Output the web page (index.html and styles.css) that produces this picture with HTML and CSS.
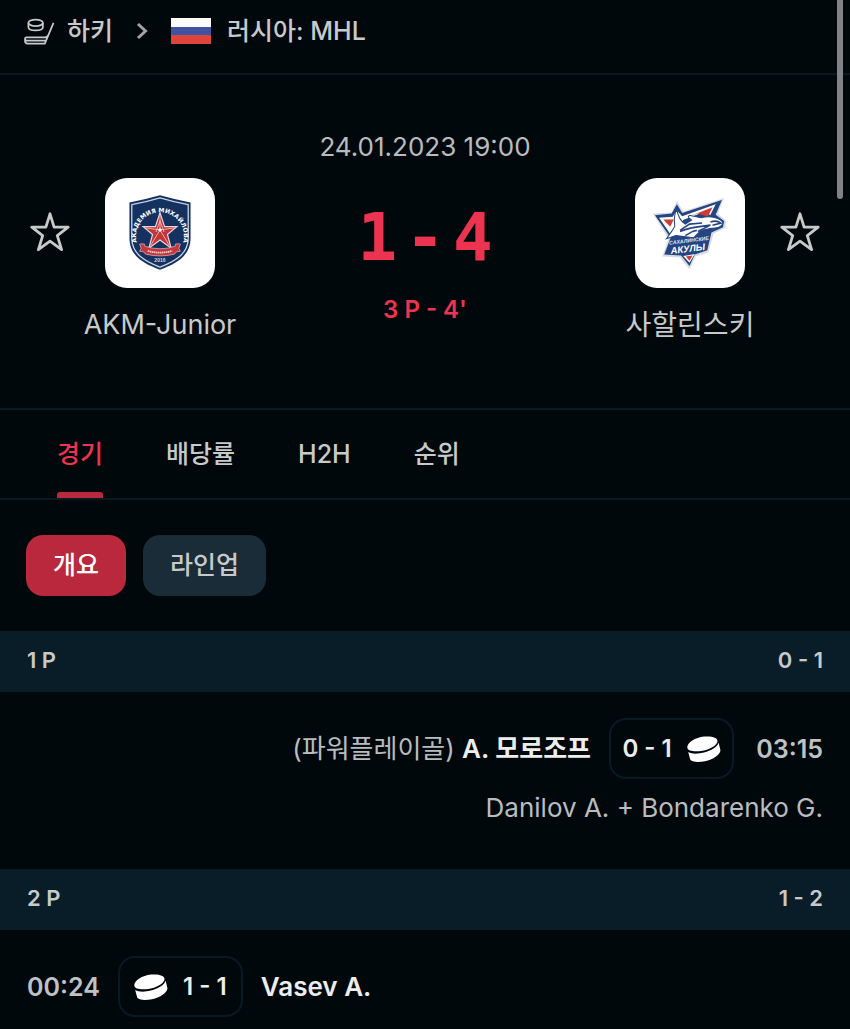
FILE: index.html
```html
<!DOCTYPE html>
<html lang="ko">
<head>
<meta charset="utf-8">
<meta name="viewport" content="width=device-width, initial-scale=1">
<title>AKM-Junior - 사할린스키</title>
<link rel="stylesheet" href="styles.css">
</head>
<body>
<svg class="symbols" aria-hidden="true">
  <symbol id="star" viewBox="0 0 40 40"><path d="M20 1.800 24.100 15.200H38.200L27.300 23.600 31.600 37.600 20 29.200 8.400 37.600 12.700 23.600 1.800 15.200H15.900Z" fill="none" stroke="currentColor" stroke-width="2.800" stroke-linejoin="round"/></symbol>
  <symbol id="puck" viewBox="0 0 34 26"><path d="M.3 11.500C0 7 8 1.500 17 .6 24-.2 30.500 1.200 30.500 5 30.500 9.500 22 14 14 15 7 15.800.6 15 .3 11.500ZM1.200 16C5 18.300 11 18 17 16.600 24 14.800 30.500 11.200 31.600 6.600L33.400 14C33.600 18.500 26 23.500 18 25.200 11 26.500 4.500 26 3.200 23.500Z" fill="currentColor"/></symbol>
</svg>

<header class="breadcrumb">
  <a class="crumb" href="#hockey">
    <svg class="sport-icon" viewBox="0 0 32 28" aria-hidden="true"><g fill="none" stroke="currentColor" stroke-width="1.800" stroke-linejoin="round"><ellipse cx="12" cy="5" rx="7.500" ry="3.400"/><path d="M4.500 5v4.500c0 4.500 15 4.500 15 0V5M30.500 5 21.500 26.500H4C1.500 26.500 1 25 1 23.500V21.500C1 20.500 1.500 20 2.500 20H21.500C23.500 20 24.500 19.500 25 18M1 22C1.500 23.500 2.500 23.500 4 23.500H22"/></g></svg>
    <span>하키</span>
  </a>
  <svg class="chevron" viewBox="0 0 12 18" aria-hidden="true"><path d="M2 2 9.500 9 2 16" fill="none" stroke="currentColor" stroke-width="3"/></svg>
  <a class="crumb league" href="#mhl">
    <span class="flag" aria-hidden="true"></span>
    <span>러시아: MHL</span>
  </a>
</header>

<main>
  <section class="match">
    <time class="kickoff" datetime="2023-01-24T19:00">24.01.2023 19:00</time>
    <div class="duel">
      <button class="favorite" type="button" aria-label="AKM-Junior"><svg viewBox="0 0 40 40"><use href="#star"/></svg></button>
      <a class="team" href="#akm">
        <span class="crest">
          <svg viewBox="1 2 108 108" aria-hidden="true">
            <defs><path id="arc" d="M32 64A23.500 23.500 0 1 1 78 64"/></defs>
            <path d="M25 26Q41 23 55 19 69 23 85 26V61C85 78 72 86 55 92 38 86 25 78 25 61Z" fill="#14315f"/>
            <path d="M27.300 28.200Q42 25.500 55 21.600 68 25.500 82.700 28.200V61C82.700 76 71 83.500 55 89.500 39 83.500 27.300 76 27.300 61Z" fill="none" stroke="#c6d2e3" stroke-width="1.300"/>
            <text class="crest-arc"><textPath href="#arc" startOffset="50%" text-anchor="middle">АКАДЕМИЯ МИХАЙЛОВА</textPath></text>
            <path d="M55 36 59.500 49.800H71.500L62.300 57.400 66 71 55 62.800 44 71 47.700 57.400 38.500 49.800H50.500Z" fill="#c13538" stroke="#e4d5da" stroke-width="1.200"/>
            <path d="M55 38V53M55 53 69 51M55 53 64 68M55 53 46 68M55 53 41 51M51 55 55 44 59 55" fill="none" stroke="#ecc8cc" stroke-width=".8"/>
            <circle cx="55" cy="53" r="1.600" fill="#fff"/>
            <path d="M35 67Q37 66 40 67V69Q55 74 70 69V67Q73 66 75 67L73.500 71 75 74 71 74.500Q70 77 68 77 55 80 42 77 40 77 39 74.500L35 74 36.500 71Z" fill="#c4373b" stroke="#ddb7c1" stroke-width=".7"/>
            <path d="M43 73.500Q55 77 67 73.500" fill="none" stroke="#f0cdd1" stroke-width="1.700" stroke-dasharray="1.500 .5"/>
            <text class="crest-year" x="55" y="84.500">2016</text>
          </svg>
        </span>
        <span class="team-name">AKM-Junior</span>
      </a>
      <div class="result">
        <div class="score"><span>1</span><span>-</span><span>4</span></div>
        <div class="status">3 P - 4'</div>
      </div>
      <a class="team" href="#sakhalin">
        <span class="crest">
          <svg viewBox="2 3 105 105" aria-hidden="true">
            <path d="M19 37 37 36 42 25 48 35 87 22 81 37 89 44 88 51 77 56 72 74 60 78 54 90 45 79 28 78 34 61Z" fill="#d5dae3"/>
            <path d="M21 38.500 37 37 42 28 47 36.500 85 24 79 38 87 44 86 50 75 55 71 72 59 76 54 87 46 77 30 76 36 60Z" fill="#244482"/>
            <path d="M25 41 38 40 42 34 47 39.500 79 28 74 38 64 37 48 43 43 51 36 57Z" fill="#fff"/>
            <path d="M29 42.500H39L35.500 49.500ZM53 40 76 31 71.500 40 62 37Z" fill="#cf3b35"/>
            <path d="M32 61 37 54 40 49C39 42 40 36 42 33 43 40 45 44 50 47L56 43C51 40 53 38 56 39L65 41C75 38 85 42 86 46 85 49 81 51 75 51L65 53 58 60 50 59 41 58Z" fill="#fff" stroke="#244482" stroke-width="1"/>
            <path d="M45 54C54 50 65 49 74 48L62 54M50 58 57 54 61 53M45 53 54 47 66 46M74 45Q80 43 84 46L76 48" fill="none" stroke="#244482" stroke-width="1.500"/>
            <path d="M48 77.500 54 76.500 59 75.500 54 84Z" fill="#fff"/>
            <path d="M50.500 78 57 77 54 82Z" fill="#cf3b35"/>
            <g transform="rotate(-7 53 67)"><text class="shark-top" x="54" y="64.500">САХАЛИНСКИЕ</text><text class="shark-name" x="52" y="73.500">АКУЛЫ</text></g>
          </svg>
        </span>
        <span class="team-name hangul">사할린스키</span>
      </a>
      <button class="favorite" type="button" aria-label="사할린스키"><svg viewBox="0 0 40 40"><use href="#star"/></svg></button>
    </div>
  </section>

  <nav class="tabs">
    <a class="tab active" href="#match" aria-current="page">경기</a>
    <a class="tab" href="#odds">배당률</a>
    <a class="tab" href="#h2h">H2H</a>
    <a class="tab" href="#standings">순위</a>
  </nav>

  <div class="chips">
    <button class="chip selected" type="button">개요</button>
    <button class="chip" type="button">라인업</button>
  </div>

  <section>
    <h2 class="period"><span>1 P</span><span>0 - 1</span></h2>
    <div class="event away">
      <div class="event-line">
        <span class="time">03:15</span>
        <span class="goal"><svg class="puck" viewBox="0 0 34 26" aria-hidden="true"><use href="#puck"/></svg><span>0 - 1</span></span>
        <span class="scorer"><span class="note">(파워플레이골)</span> <b>A. 모로조프</b></span>
      </div>
      <div class="assist">Danilov A. + Bondarenko G.</div>
    </div>
  </section>

  <section>
    <h2 class="period"><span>2 P</span><span>1 - 2</span></h2>
    <div class="event last">
      <div class="event-line">
        <span class="time">00:24</span>
        <span class="goal"><svg class="puck" viewBox="0 0 34 26" aria-hidden="true"><use href="#puck"/></svg><span>1 - 1</span></span>
        <span class="scorer"><b>Vasev A.</b></span>
      </div>
    </div>
  </section>
</main>
<div class="scroll-thumb" aria-hidden="true"></div>
</body>
</html>
```
FILE: styles.css
```css
* { box-sizing: border-box; }

body {
  margin: 0;
  min-height: 100vh;
  position: relative;
  background: #01080c;
  color: #c8caca;
  font: 400 24px/32px Inter, "Noto Sans CJK KR", sans-serif;
}

a { color: inherit; text-decoration: none; }
button { border: 0; padding: 0; background: none; color: inherit; font: inherit; cursor: pointer; }
svg { display: block; }
.symbols { position: absolute; width: 0; height: 0; }

.breadcrumb {
  display: flex;
  align-items: center;
  padding: 15px 24px 26px;
  border-bottom: 2px solid #071a24;
  font-size: 25px;
  font-weight: 500;
}
.crumb { display: flex; align-items: center; gap: 12px; }
.league { gap: 16px; }
.sport-icon { width: 31px; height: 27px; }
.chevron { width: 12px; height: 18px; margin: 0 23px; color: #a2a3a4; }
.flag {
  width: 40px;
  height: 26px;
  background: linear-gradient(#fafafa 34%, #4053a3 34% 67%, #dc443c 67%);
}

.match { padding: 56px 30px 65px; border-bottom: 2px solid #071a24; }
.kickoff { display: block; margin-bottom: 15px; text-align: center; font-size: 26px; color: #b9bcbe; }
.duel { display: grid; grid-template-columns: 40px 180px 1fr 180px 40px; align-items: start; }
.favorite { margin-top: 34px; }
.favorite svg { width: 40px; height: 40px; }
.team { display: flex; flex-direction: column; align-items: center; gap: 19px; }
.crest { width: 110px; height: 110px; border-radius: 22px; background: #fff; overflow: hidden; }
.crest-arc { font: 700 6px "DejaVu Sans", sans-serif; fill: #fff; }
.crest-year { font: 700 5px "Liberation Sans", sans-serif; fill: #c9d3e2; text-anchor: middle; }
.shark-top { font: italic 700 5px "Liberation Sans", sans-serif; fill: #dfe6f2; text-anchor: middle; }
.shark-name { font: italic 700 9px "Liberation Sans", sans-serif; fill: #fff; text-anchor: middle; }
.team-name { font-size: 27px; line-height: 36px; white-space: nowrap; }
.hangul { font-size: 28px; }
.result { padding-top: 30px; text-align: center; color: #ec334f; }
.score {
  display: flex;
  justify-content: center;
  gap: 8px;
  font: 700 66px/60px "DejaVu Sans Mono", monospace;
}
.status { margin-top: 26px; font-weight: 600; }

.tabs { display: flex; gap: 63px; padding: 0 57px; border-bottom: 2px solid #071a24; font-size: 25px; font-weight: 500; }
.tab { padding: 28px 0 22px; border-bottom: 6px solid transparent; }
.tab.active { color: #ec334f; position: relative; }
.tab.active::after {
  content: "";
  position: absolute;
  inset: auto 0 -6px;
  height: 6px;
  border-radius: 3px 3px 0 0;
  background: #b9283c;
}

.chips { display: flex; gap: 17px; padding: 35px 26px; }
.chip { height: 61px; padding: 0 27px 2px; border-radius: 17px; background: #1a2c37; font-size: 25px; font-weight: 500; }
.chip.selected { background: #b9283c; color: #fff; }

.period {
  display: flex;
  justify-content: space-between;
  align-items: center;
  height: 61px;
  margin: 0;
  padding: 0 27px 3px;
  background: #091d28;
  font-size: 22px;
  font-weight: 600;
}
.event { padding: 26px 27px 45px; font-size: 26px; }
.event.last { padding-bottom: 12px; }
.event-line { display: flex; align-items: center; gap: 18px; }
.away .event-line, .away .goal { flex-direction: row-reverse; }
.time { min-width: 71px; font-size: 25px; font-weight: 600; color: #bfc2c3; }
.away .time { text-align: right; }
.goal {
  display: flex;
  align-items: center;
  justify-content: center;
  gap: 15px;
  width: 125px;
  height: 61px;
  border: 2px solid #071a24;
  border-radius: 17px;
  color: #ededed;
  font-size: 24px;
  font-weight: 600;
}
.puck { width: 34px; height: 26px; color: #fff; }
.scorer b { color: #ededed; font-weight: 600; }
.note { color: #b9bcbe; }
.assist { margin-top: 13px; color: #b9bcbe; }
.away .assist { text-align: right; }

.scroll-thumb {
  position: absolute;
  top: 0;
  right: 7px;
  width: 6px;
  height: 199px;
  border-radius: 0 0 3px 3px;
  background: #808487;
}
```
